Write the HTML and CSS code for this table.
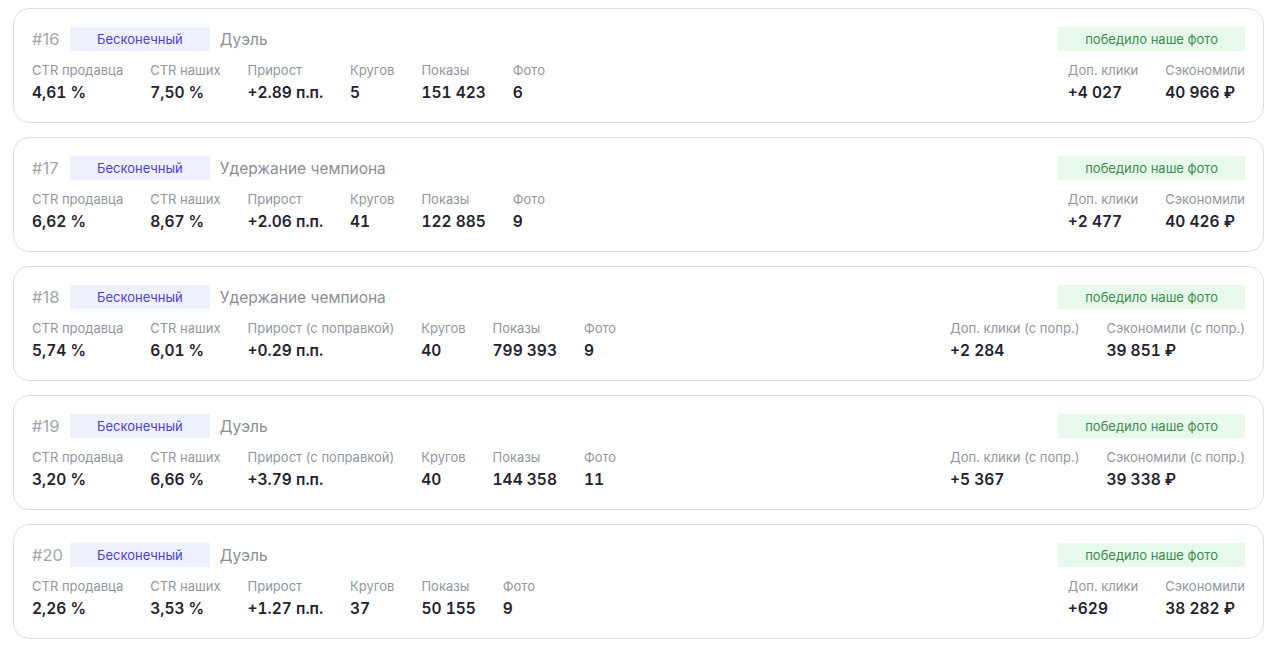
FILE: index.html
```html
<!DOCTYPE html>
<html lang="ru">
<head>
<meta charset="utf-8">
<link rel="stylesheet" href="styles.css">
</head>
<body>
<div class="list">

  <div class="card">
    <div class="left">
      <div class="head"><span class="num">#16</span><span class="mode">Бесконечный</span><span class="type">Дуэль</span></div>
      <div class="metrics">
        <div class="m"><div class="lbl">CTR продавца</div><div class="val">4,61 %</div></div>
        <div class="m"><div class="lbl">CTR наших</div><div class="val">7,50 %</div></div>
        <div class="m"><div class="lbl">Прирост</div><div class="val">+2.89 п.п.</div></div>
        <div class="m"><div class="lbl">Кругов</div><div class="val">5</div></div>
        <div class="m"><div class="lbl">Показы</div><div class="val">151 423</div></div>
        <div class="m"><div class="lbl">Фото</div><div class="val">6</div></div>
      </div>
    </div>
    <div class="right">
      <span class="win">победило наше фото</span>
      <div class="metrics">
        <div class="m"><div class="lbl">Доп. клики</div><div class="val">+4 027</div></div>
        <div class="m"><div class="lbl">Сэкономили</div><div class="val">40 966 ₽</div></div>
      </div>
    </div>
  </div>

  <div class="card">
    <div class="left">
      <div class="head"><span class="num">#17</span><span class="mode">Бесконечный</span><span class="type">Удержание чемпиона</span></div>
      <div class="metrics">
        <div class="m"><div class="lbl">CTR продавца</div><div class="val">6,62 %</div></div>
        <div class="m"><div class="lbl">CTR наших</div><div class="val">8,67 %</div></div>
        <div class="m"><div class="lbl">Прирост</div><div class="val">+2.06 п.п.</div></div>
        <div class="m"><div class="lbl">Кругов</div><div class="val">41</div></div>
        <div class="m"><div class="lbl">Показы</div><div class="val">122 885</div></div>
        <div class="m"><div class="lbl">Фото</div><div class="val">9</div></div>
      </div>
    </div>
    <div class="right">
      <span class="win">победило наше фото</span>
      <div class="metrics">
        <div class="m"><div class="lbl">Доп. клики</div><div class="val">+2 477</div></div>
        <div class="m"><div class="lbl">Сэкономили</div><div class="val">40 426 ₽</div></div>
      </div>
    </div>
  </div>

  <div class="card">
    <div class="left">
      <div class="head"><span class="num">#18</span><span class="mode">Бесконечный</span><span class="type">Удержание чемпиона</span></div>
      <div class="metrics">
        <div class="m"><div class="lbl">CTR продавца</div><div class="val">5,74 %</div></div>
        <div class="m"><div class="lbl">CTR наших</div><div class="val">6,01 %</div></div>
        <div class="m"><div class="lbl">Прирост (с поправкой)</div><div class="val">+0.29 п.п.</div></div>
        <div class="m"><div class="lbl">Кругов</div><div class="val">40</div></div>
        <div class="m"><div class="lbl">Показы</div><div class="val">799 393</div></div>
        <div class="m"><div class="lbl">Фото</div><div class="val">9</div></div>
      </div>
    </div>
    <div class="right">
      <span class="win">победило наше фото</span>
      <div class="metrics">
        <div class="m"><div class="lbl">Доп. клики (с попр.)</div><div class="val">+2 284</div></div>
        <div class="m"><div class="lbl">Сэкономили (с попр.)</div><div class="val">39 851 ₽</div></div>
      </div>
    </div>
  </div>

  <div class="card">
    <div class="left">
      <div class="head"><span class="num">#19</span><span class="mode">Бесконечный</span><span class="type">Дуэль</span></div>
      <div class="metrics">
        <div class="m"><div class="lbl">CTR продавца</div><div class="val">3,20 %</div></div>
        <div class="m"><div class="lbl">CTR наших</div><div class="val">6,66 %</div></div>
        <div class="m"><div class="lbl">Прирост (с поправкой)</div><div class="val">+3.79 п.п.</div></div>
        <div class="m"><div class="lbl">Кругов</div><div class="val">40</div></div>
        <div class="m"><div class="lbl">Показы</div><div class="val">144 358</div></div>
        <div class="m"><div class="lbl">Фото</div><div class="val">11</div></div>
      </div>
    </div>
    <div class="right">
      <span class="win">победило наше фото</span>
      <div class="metrics">
        <div class="m"><div class="lbl">Доп. клики (с попр.)</div><div class="val">+5 367</div></div>
        <div class="m"><div class="lbl">Сэкономили (с попр.)</div><div class="val">39 338 ₽</div></div>
      </div>
    </div>
  </div>

  <div class="card">
    <div class="left">
      <div class="head"><span class="num">#20</span><span class="mode">Бесконечный</span><span class="type">Дуэль</span></div>
      <div class="metrics">
        <div class="m"><div class="lbl">CTR продавца</div><div class="val">2,26 %</div></div>
        <div class="m"><div class="lbl">CTR наших</div><div class="val">3,53 %</div></div>
        <div class="m"><div class="lbl">Прирост</div><div class="val">+1.27 п.п.</div></div>
        <div class="m"><div class="lbl">Кругов</div><div class="val">37</div></div>
        <div class="m"><div class="lbl">Показы</div><div class="val">50 155</div></div>
        <div class="m"><div class="lbl">Фото</div><div class="val">9</div></div>
      </div>
    </div>
    <div class="right">
      <span class="win">победило наше фото</span>
      <div class="metrics">
        <div class="m"><div class="lbl">Доп. клики</div><div class="val">+629</div></div>
        <div class="m"><div class="lbl">Сэкономили</div><div class="val">38 282 ₽</div></div>
      </div>
    </div>
  </div>

</div>
</body>
</html>
```
FILE: styles.css
```css
* { box-sizing: border-box; }
html, body { margin: 0; padding: 0; background: #ffffff; }
body {
  font-family: Inter, "Noto Sans", "Liberation Sans", sans-serif;
  color: #1f2430;
}
.list {
  display: flex;
  flex-direction: column;
  gap: 14px;
  padding: 8px 16px 0 13px;
}
.card {
  height: 115px;
  border: 1px solid #dcdee2;
  border-radius: 16px;
  padding: 18px 18px 0 18px;
  display: flex;
  justify-content: space-between;
  align-items: flex-start;
}
.left, .right {
  display: flex;
  flex-direction: column;
}
.right { align-items: flex-end; }
.head {
  display: flex;
  align-items: center;
  height: 24px;
}
.num {
  width: 38px;
  flex: none;
  font-size: 16.5px;
  color: #a2a6ad;
}
.mode {
  display: inline-flex;
  align-items: center;
  height: 24px;
  padding: 0 27px;
  background: #eff0fd;
  color: #4b3fd6;
  font-size: 13px;
}
.type {
  font-size: 15.5px;
  color: #8a8e96;
  margin-left: 10px;
}
.win {
  display: inline-flex;
  align-items: center;
  height: 24px;
  padding: 0 27px;
  background: #e7f9eb;
  color: #3f8a50;
  font-size: 13px;
}
.metrics {
  display: flex;
  gap: 27px;
  margin-top: 10px;
}
.lbl {
  font-size: 13px;
  line-height: 18px;
  color: #9196a0;
  white-space: nowrap;
}
.val {
  font-size: 15.5px;
  line-height: 22px;
  font-weight: 600;
  color: #1f2430;
  margin-top: 3px;
  white-space: nowrap;
  font-variant-numeric: tabular-nums;
}
```
